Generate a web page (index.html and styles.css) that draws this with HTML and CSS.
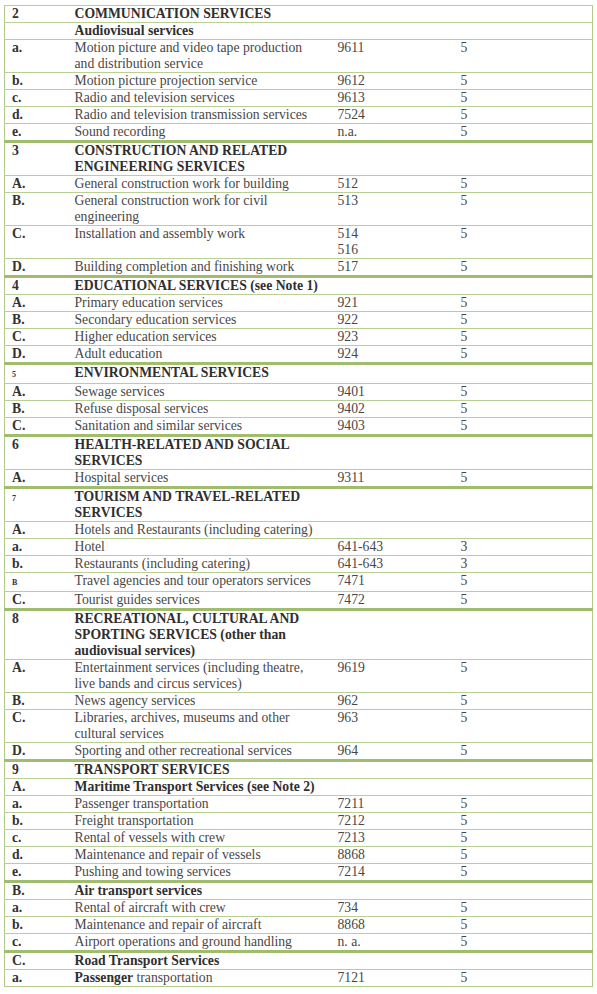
FILE: index.html
```html
<!DOCTYPE html>
<html lang="en">
<head>
<meta charset="utf-8">
<title>Services schedule</title>
<link rel="stylesheet" href="styles.css">
</head>
<body>
<table class="sched">
<colgroup><col class="c1"><col class="c2"><col class="c3"><col class="c4"></colgroup>
<tbody>
<tr class="head"><td class="n">2</td><td class="d b">COMMUNICATION SERVICES</td><td></td><td></td></tr>
<tr><td class="n"></td><td class="d b">Audiovisual services</td><td></td><td></td></tr>
<tr><td class="n">a.</td><td class="d">Motion picture and video tape production<br>and distribution service</td><td class="k">9611</td><td class="v">5</td></tr>
<tr><td class="n">b.</td><td class="d">Motion picture projection service</td><td class="k">9612</td><td class="v">5</td></tr>
<tr><td class="n">c.</td><td class="d">Radio and television services</td><td class="k">9613</td><td class="v">5</td></tr>
<tr><td class="n">d.</td><td class="d">Radio and television transmission services</td><td class="k">7524</td><td class="v">5</td></tr>
<tr><td class="n">e.</td><td class="d">Sound recording</td><td class="k">n.a.</td><td class="v">5</td></tr>

<tr class="sec"><td class="n">3</td><td class="d b">CONSTRUCTION AND RELATED<br>ENGINEERING SERVICES</td><td></td><td></td></tr>
<tr><td class="n">A.</td><td class="d">General construction work for building</td><td class="k">512</td><td class="v">5</td></tr>
<tr><td class="n">B.</td><td class="d">General construction work for civil<br>engineering</td><td class="k">513</td><td class="v">5</td></tr>
<tr><td class="n">C.</td><td class="d">Installation and assembly work</td><td class="k">514<br>516</td><td class="v">5</td></tr>
<tr><td class="n">D.</td><td class="d">Building completion and finishing work</td><td class="k">517</td><td class="v">5</td></tr>

<tr class="sec"><td class="n">4</td><td class="d b">EDUCATIONAL SERVICES (see Note 1)</td><td></td><td></td></tr>
<tr><td class="n">A.</td><td class="d">Primary education services</td><td class="k">921</td><td class="v">5</td></tr>
<tr><td class="n">B.</td><td class="d">Secondary education services</td><td class="k">922</td><td class="v">5</td></tr>
<tr><td class="n">C.</td><td class="d">Higher education services</td><td class="k">923</td><td class="v">5</td></tr>
<tr><td class="n">D.</td><td class="d">Adult education</td><td class="k">924</td><td class="v">5</td></tr>

<tr class="sec"><td class="n"><span class="tiny">5</span></td><td class="d b">ENVIRONMENTAL SERVICES</td><td></td><td></td></tr>
<tr><td class="n">A.</td><td class="d">Sewage services</td><td class="k">9401</td><td class="v">5</td></tr>
<tr><td class="n">B.</td><td class="d">Refuse disposal services</td><td class="k">9402</td><td class="v">5</td></tr>
<tr><td class="n">C.</td><td class="d">Sanitation and similar services</td><td class="k">9403</td><td class="v">5</td></tr>

<tr class="sec"><td class="n">6</td><td class="d b">HEALTH-RELATED AND SOCIAL<br>SERVICES</td><td></td><td></td></tr>
<tr><td class="n">A.</td><td class="d">Hospital services</td><td class="k">9311</td><td class="v">5</td></tr>

<tr class="sec"><td class="n"><span class="tiny">7</span></td><td class="d b">TOURISM AND TRAVEL-RELATED<br>SERVICES</td><td></td><td></td></tr>
<tr><td class="n">A.</td><td class="d">Hotels and Restaurants (including catering)</td><td></td><td></td></tr>
<tr><td class="n">a.</td><td class="d">Hotel</td><td class="k">641-643</td><td class="v">3</td></tr>
<tr><td class="n">b.</td><td class="d">Restaurants (including catering)</td><td class="k">641-643</td><td class="v">3</td></tr>
<tr><td class="n"><span class="tiny">B</span></td><td class="d">Travel agencies and tour operators services</td><td class="k">7471</td><td class="v">5</td></tr>
<tr><td class="n">C.</td><td class="d">Tourist guides services</td><td class="k">7472</td><td class="v">5</td></tr>

<tr class="sec"><td class="n">8</td><td class="d b">RECREATIONAL, CULTURAL AND<br>SPORTING SERVICES (other than<br>audiovisual services)</td><td></td><td></td></tr>
<tr><td class="n">A.</td><td class="d">Entertainment services (including theatre,<br>live bands and circus services)</td><td class="k">9619</td><td class="v">5</td></tr>
<tr><td class="n">B.</td><td class="d">News agency services</td><td class="k">962</td><td class="v">5</td></tr>
<tr><td class="n">C.</td><td class="d">Libraries, archives, museums and other<br>cultural services</td><td class="k">963</td><td class="v">5</td></tr>
<tr><td class="n">D.</td><td class="d">Sporting and other recreational services</td><td class="k">964</td><td class="v">5</td></tr>

<tr class="sec"><td class="n">9</td><td class="d b">TRANSPORT SERVICES</td><td></td><td></td></tr>
<tr><td class="n">A.</td><td class="d b">Maritime Transport Services (see Note 2)</td><td></td><td></td></tr>
<tr><td class="n">a.</td><td class="d">Passenger transportation</td><td class="k">7211</td><td class="v">5</td></tr>
<tr><td class="n">b.</td><td class="d">Freight transportation</td><td class="k">7212</td><td class="v">5</td></tr>
<tr><td class="n">c.</td><td class="d">Rental of vessels with crew</td><td class="k">7213</td><td class="v">5</td></tr>
<tr><td class="n">d.</td><td class="d">Maintenance and repair of vessels</td><td class="k">8868</td><td class="v">5</td></tr>
<tr><td class="n">e.</td><td class="d">Pushing and towing services</td><td class="k">7214</td><td class="v">5</td></tr>

<tr class="sec"><td class="n">B.</td><td class="d b">Air transport services</td><td></td><td></td></tr>
<tr><td class="n">a.</td><td class="d">Rental of aircraft with crew</td><td class="k">734</td><td class="v">5</td></tr>
<tr><td class="n">b.</td><td class="d">Maintenance and repair of aircraft</td><td class="k">8868</td><td class="v">5</td></tr>
<tr><td class="n">c.</td><td class="d">Airport operations and ground handling</td><td class="k">n. a.</td><td class="v">5</td></tr>

<tr class="sec"><td class="n">C.</td><td class="d b">Road Transport Services</td><td></td><td></td></tr>
<tr><td class="n">a.</td><td class="d"><strong class="b">Passenger</strong> transportation</td><td class="k">7121</td><td class="v">5</td></tr>
</tbody>
</table>
</body>
</html>
```

FILE: styles.css
```css
html, body {
  margin: 0;
  padding: 0;
  background: #ffffff;
}

body {
  padding: 5px 0 0 4px;
  font-family: "Liberation Serif", "Times New Roman", serif;
  font-size: 13.7px;
  color: #474747;
}

.sched {
  border-collapse: collapse;
  table-layout: fixed;
  width: 588px;
  border: 1px solid #b3ca8a;
}

.c1 { width: 63px; }
.c2 { width: 263px; }
.c3 { width: 123px; }
.c4 { width: 139px; }

.sched td {
  padding: 0 4px 0 7px;
  line-height: 16px;
  vertical-align: top;
  border-top: 1px solid #b9cf95;
  white-space: nowrap;
  overflow: visible;
}

.sched tr.sec td {
  border-top: 3px solid #9fbd6c;
}

.sched td.n {
  font-weight: bold;
  color: #333333;
}

.sched .b {
  font-weight: bold;
  color: #2f2f2f;
}

.sched td.k,
.sched td.v {
  color: #474747;
}

.tiny {
  font-size: 8px;
  font-weight: bold;
}
```
